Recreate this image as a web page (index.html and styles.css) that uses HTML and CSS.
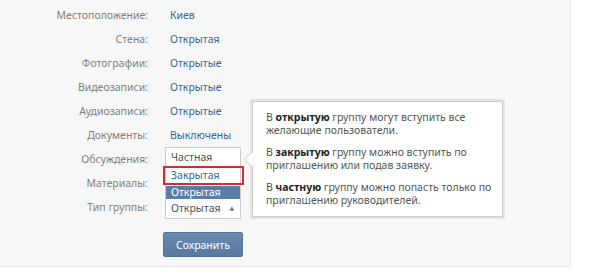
FILE: index.html
```html
<!DOCTYPE html>
<html>
<head>
  <meta charset="utf-8" />
  <title>Настройки группы</title>
  <link rel="stylesheet" href="styles.css">
</head>
<body>

<div class="panel">
  <div class="settings">
    <div class="row"><span class="label">Местоположение:</span><span class="value">Киев</span></div>
    <div class="row"><span class="label">Стена:</span><span class="value">Открытая</span></div>
    <div class="row"><span class="label">Фотографии:</span><span class="value">Открытые</span></div>
    <div class="row"><span class="label">Видеозаписи:</span><span class="value">Открытые</span></div>
    <div class="row"><span class="label">Аудиозаписи:</span><span class="value">Открытые</span></div>
    <div class="row"><span class="label">Документы:</span><span class="value">Выключены</span></div>
    <div class="row"><span class="label">Обсуждения:</span><span class="value"></span></div>
    <div class="row"><span class="label">Материалы:</span><span class="value"></span></div>
    <div class="row">
      <span class="label">Тип группы:</span>
      <div class="select">
        <span>Открытая</span>
        <span class="arrow">&#9650;</span>
        <ul class="menu">
          <li>Частная</li>
          <li class="marked">Закрытая</li>
          <li class="active">Открытая</li>
        </ul>
      </div>
    </div>
    <div class="actions">
      <button class="save">Сохранить</button>
    </div>
  </div>

  <div class="hint">
    <p>В <b>открытую</b> группу могут вступить все желающие пользователи.</p>
    <p>В <b>закрытую</b> группу можно вступить по приглашению или подав заявку.</p>
    <p>В <b>частную</b> группу можно попасть только по приглашению руководителей.</p>
  </div>
</div>

</body>
</html>
```

FILE: styles.css
```css
body {
  margin: 0;
  background: #fff;
  font-family: "Noto Sans", "DejaVu Sans", sans-serif;
  font-size: 10.5px;
}

.panel {
  position: relative;
  width: 570px;
  height: 266px;
  background: #f7f7f7;
  border-right: 1px solid #e6e6e6;
  border-bottom: 1px solid #e6e6e6;
}

.settings {
  padding-top: 3px;
}

.row {
  display: flex;
  align-items: center;
  height: 24px;
}

.label {
  width: 148px;
  text-align: right;
  color: #7f7f7f;
}

.value {
  margin-left: 22px;
  color: #3b6592;
}

.select {
  position: relative;
  display: flex;
  justify-content: space-between;
  align-items: center;
  box-sizing: border-box;
  width: 76px;
  height: 21px;
  margin-left: 17px;
  margin-top: 2px;
  padding: 0 6px 0 5px;
  background: #fff;
  border: 1px solid #c5ccd4;
  color: #4a5360;
}

.arrow {
  font-size: 6px;
  color: #777;
}

.menu {
  position: absolute;
  left: -1px;
  bottom: 100%;
  width: 76px;
  margin: 0;
  padding: 0;
  list-style: none;
  background: #fff;
  border: 1px solid #c5ccd4;
  border-bottom: none;
  box-sizing: border-box;
}

.menu li {
  height: 19px;
  line-height: 19px;
  padding-left: 5px;
  color: #4a5360;
}

.menu li.marked {
  height: 17px;
  line-height: 17px;
  margin: 0 -3px 2px -2px;
  padding-left: 7px;
  color: #3b6592;
  outline: 2px solid #d42a33;
  outline-offset: -1px;
}

.menu li.active {
  height: 13px;
  line-height: 13px;
  background: #5b7ea6;
  color: #fff;
}

.actions {
  padding: 13px 0 0 163px;
}

.save {
  width: 80px;
  height: 25px;
  border: 1px solid #52739a;
  border-radius: 2px;
  background: linear-gradient(#6a8bb0, #58799f);
  color: #fff;
  font-family: inherit;
  font-size: 10.5px;
}

.hint {
  position: absolute;
  left: 252px;
  top: 101px;
  width: 251px;
  height: 116px;
  box-sizing: border-box;
  padding: 9px 10px 0 13px;
  background: #fff;
  border: 1px solid #c9c9c9;
  box-shadow: 0 0 0 2px #e4e4e4;
  color: #555;
  line-height: 13px;
}

.hint::before {
  content: "";
  position: absolute;
  left: -7px;
  top: 52px;
  width: 10px;
  height: 10px;
  background: #fff;
  border-left: 1px solid #d6d6d6;
  border-bottom: 1px solid #d6d6d6;
  transform: rotate(45deg);
}

.hint p {
  margin: 0 0 9px;
}

.hint b {
  color: #222;
}
```
